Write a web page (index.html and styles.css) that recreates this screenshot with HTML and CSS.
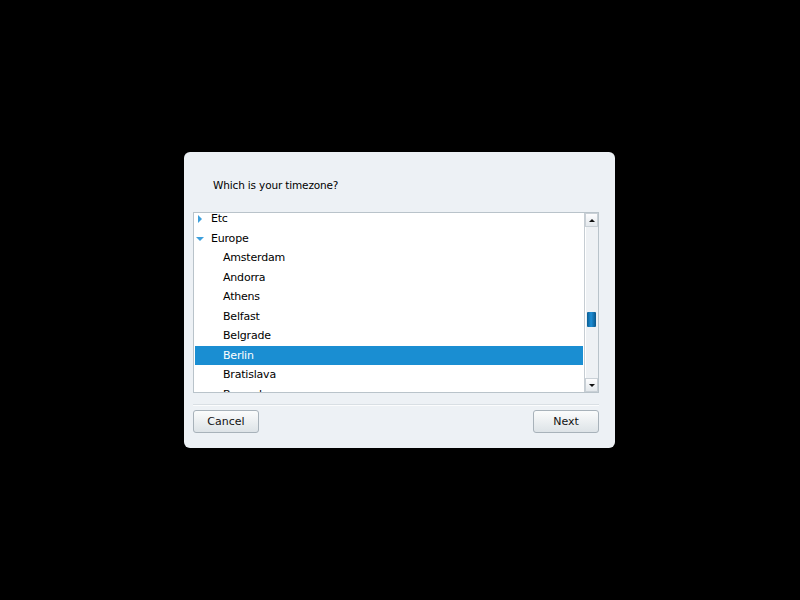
FILE: index.html
```html
<!DOCTYPE html>
<html lang="en">
<head>
    <meta charset="UTF-8">
    <title>Timezone</title>
    <link rel="stylesheet" href="styles.css">
</head>
<body>
    <div class="dialog">
        <div class="title">Which is your timezone?</div>

        <div class="list-box">
            <div class="list-view">
                <div class="rows">
                    <div class="row group"><span class="arrow right"></span>Etc</div>
                    <div class="row group"><span class="arrow down"></span>Europe</div>
                    <div class="row child">Amsterdam</div>
                    <div class="row child">Andorra</div>
                    <div class="row child">Athens</div>
                    <div class="row child">Belfast</div>
                    <div class="row child">Belgrade</div>
                    <div class="row child selected">Berlin</div>
                    <div class="row child">Bratislava</div>
                    <div class="row child">Brussels</div>
                </div>
            </div>
            <div class="scrollbar">
                <div class="scroll-btn"><span class="tri up"></span></div>
                <div class="track"><div class="thumb"></div></div>
                <div class="scroll-btn"><span class="tri down"></span></div>
            </div>
        </div>

        <div class="separator"></div>

        <div class="buttons">
            <button class="btn">Cancel</button>
            <button class="btn">Next</button>
        </div>
    </div>
</body>
</html>
```

FILE: styles.css
```css
body {
    margin: 0;
    background: #000;
    height: 100vh;
    display: flex;
    align-items: center;
    justify-content: center;
    font-family: "DejaVu Sans", sans-serif;
    font-size: 11px;
    color: #000;
}

.dialog {
    width: 431px;
    height: 296px;
    margin-right: 1px;
    box-sizing: border-box;
    background: #edf1f5;
    border-radius: 6px;
    padding: 0 16px 0 9px;
    display: flex;
    flex-direction: column;
}

.title {
    padding: 24px 0 0 20px;
    line-height: 18px;
    height: 36px;
    font-size: 10.5px;
    letter-spacing: -0.15px;
}

.list-box {
    height: 181px;
    box-sizing: border-box;
    border: 1px solid #b9c3ca;
    background: #fff;
    display: flex;
}

.list-view {
    flex: 1;
    overflow: hidden;
    padding: 0 1px;
}

.rows {
    margin-top: -4px;
    letter-spacing: -0.2px;
}

.row {
    height: 19.5px;
    line-height: 19.5px;
    white-space: nowrap;
}

.group {
    padding-left: 16px;
    position: relative;
}

.child {
    padding-left: 28px;
}

.selected {
    background: #1a8ed2;
    color: #fff;
}

.arrow {
    position: absolute;
    width: 0;
    height: 0;
}

.arrow.right {
    left: 3px;
    top: 6px;
    border-top: 4px solid transparent;
    border-bottom: 4px solid transparent;
    border-left: 4px solid #3d9fdc;
}

.arrow.down {
    left: 1px;
    top: 8px;
    border-left: 4px solid transparent;
    border-right: 4px solid transparent;
    border-top: 4px solid #3d9fdc;
}

.scrollbar {
    width: 13px;
    display: flex;
    flex-direction: column;
    border-left: 1px solid #c6cdd3;
    background: #eef1f4;
}

.scroll-btn {
    height: 12px;
    display: flex;
    align-items: center;
    justify-content: center;
    background: linear-gradient(#fdfdfe, #e3e8ec);
    border: 1px solid #c9d0d6;
}

.tri {
    width: 0;
    height: 0;
    border-left: 3px solid transparent;
    border-right: 3px solid transparent;
}

.tri.up {
    border-bottom: 3px solid #111;
}

.tri.down {
    border-top: 3px solid #111;
}

.track {
    flex: 1;
    padding-top: 85px;
    border-left: 1px solid #fff;
}

.thumb {
    width: 9px;
    height: 15px;
    margin-left: 1px;
    background: linear-gradient(90deg, #0b5d92, #1d8ed6 45%, #0a5588);
    border-radius: 1px;
}

.separator {
    margin-top: 11px;
    border-top: 1px solid #d9dfe4;
    border-bottom: 1px solid #fbfcfd;
}

.buttons {
    display: flex;
    justify-content: space-between;
    margin-top: 4px;
}

.btn {
    width: 66px;
    height: 23px;
    font-family: "DejaVu Sans", sans-serif;
    font-size: 11px;
    color: #111;
    background: linear-gradient(#fbfcfc, #dde3e7);
    border: 1px solid #a8b2ba;
    border-radius: 3px;
    padding: 0;
}
```
